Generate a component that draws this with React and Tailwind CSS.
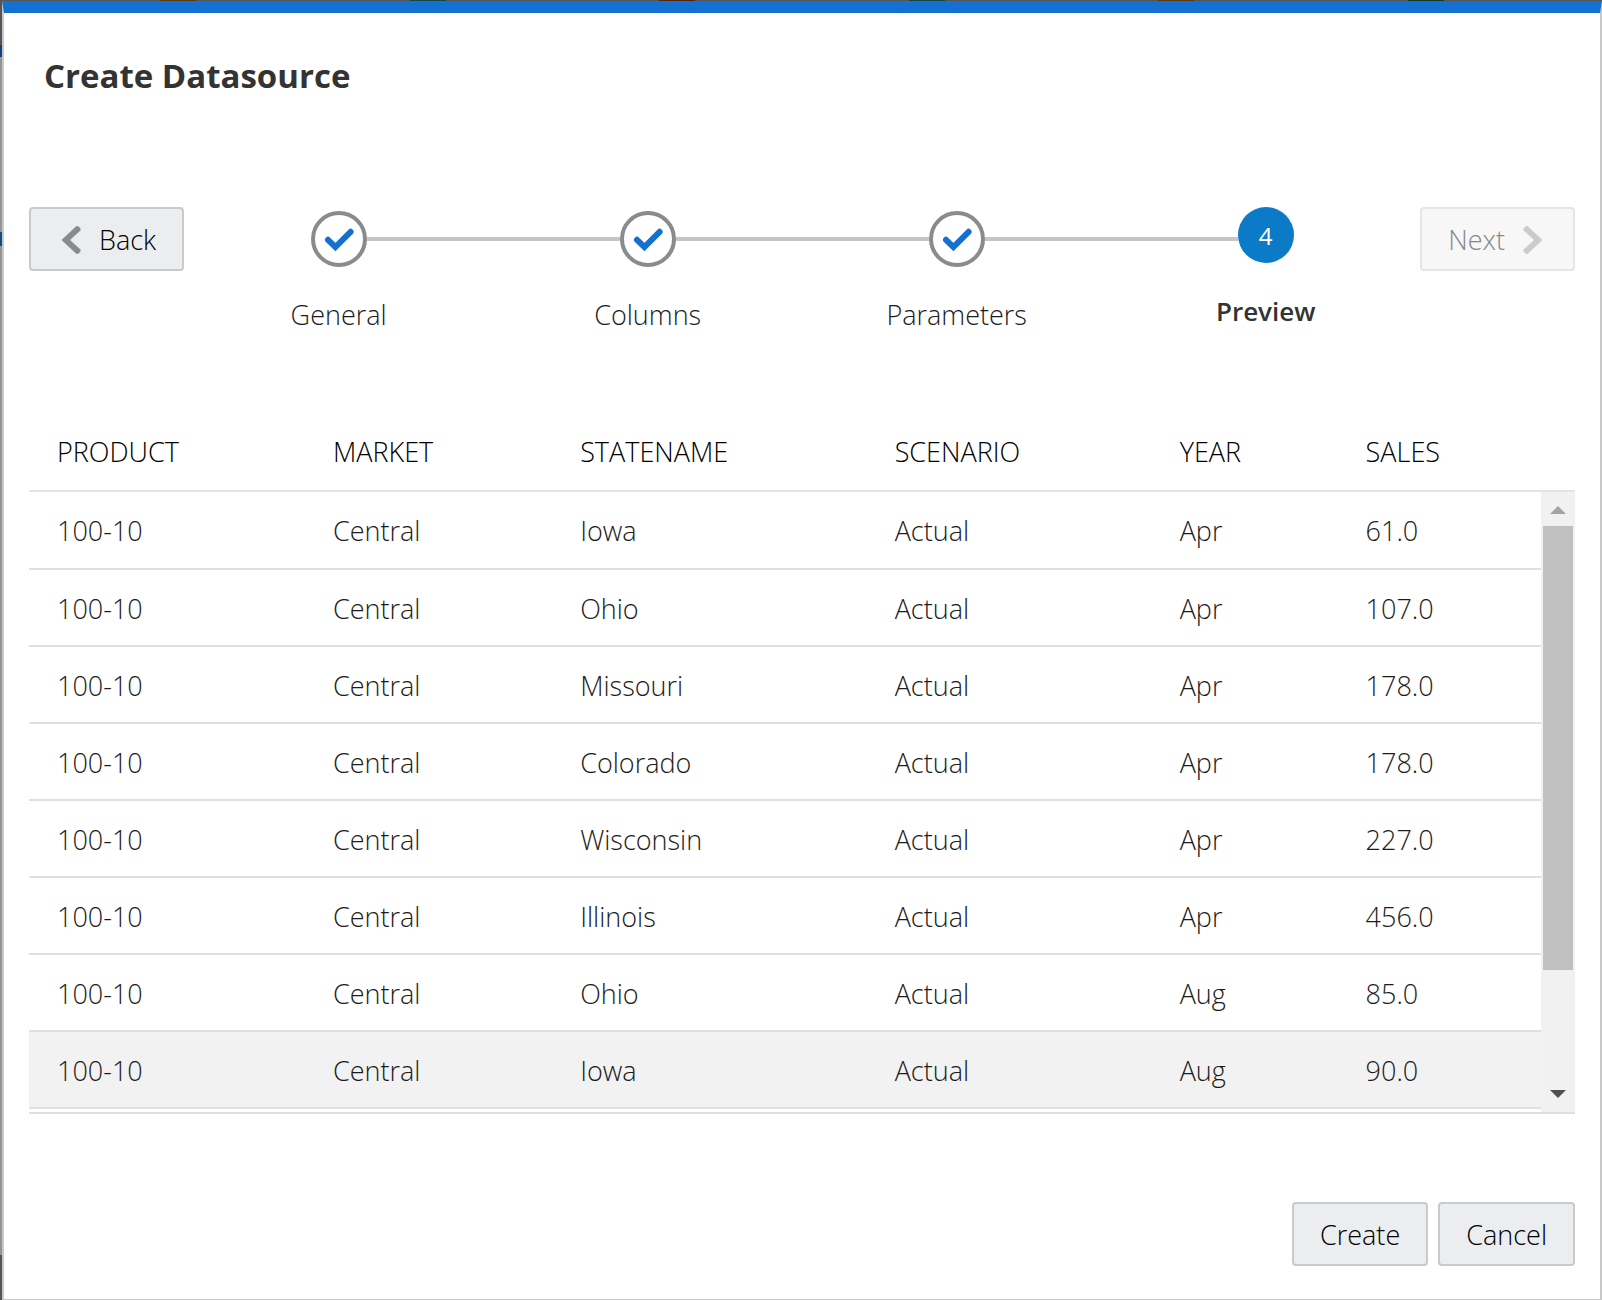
const steps = [
  { label: "General", done: true },
  { label: "Columns", done: true },
  { label: "Parameters", done: true },
  { label: "Preview", done: false },
];

const columns = [
  { name: "PRODUCT", width: "w-[18.25%]" },
  { name: "MARKET", width: "w-[16.35%]" },
  { name: "STATENAME", width: "w-[20.8%]" },
  { name: "SCENARIO", width: "w-[18.85%]" },
  { name: "YEAR", width: "w-[12.3%]" },
  { name: "SALES", width: "" },
];

const rows = [
  ["100-10", "Central", "Iowa", "Actual", "Apr", "61.0"],
  ["100-10", "Central", "Ohio", "Actual", "Apr", "107.0"],
  ["100-10", "Central", "Missouri", "Actual", "Apr", "178.0"],
  ["100-10", "Central", "Colorado", "Actual", "Apr", "178.0"],
  ["100-10", "Central", "Wisconsin", "Actual", "Apr", "227.0"],
  ["100-10", "Central", "Illinois", "Actual", "Apr", "456.0"],
  ["100-10", "Central", "Ohio", "Actual", "Aug", "85.0"],
  ["100-10", "Central", "Iowa", "Actual", "Aug", "90.0"],
];

// Edge of the dimmed page that shows above the dialog.
const backdropTiles = ["bg-[#5c3a10]", "bg-[#15463f]", "bg-[#55260e]", "bg-[#15463f]", "bg-[#5c3a10]", "bg-[#123a28]"];

const buttonClass =
  "flex h-16 items-center rounded-sm border-2 border-[#c8cacb] bg-[#ebedef] px-[26px] pt-0.5 text-black";

function Check() {
  return (
    <svg viewBox="0 0 30 24" className="h-6 w-[30px] overflow-visible" aria-hidden="true">
      <path d="M4 12.8 L11.4 20 L26.6 4.8" fill="none" stroke="#1471d2" strokeWidth="6" strokeLinecap="round" strokeLinejoin="miter" />
    </svg>
  );
}

function Chevron({ flip, color }) {
  return (
    <svg viewBox="0 0 20 28" className={flip ? "h-7 w-5 rotate-180" : "h-7 w-5"} aria-hidden="true">
      <path d="M0.5 14 L14.6 0.8 Q16.4 -0.6 17.8 0.8 L19.5 2.6 V4.4 L9 14 L19.5 23.6 V25.4 L17.8 27.2 Q16.4 28.6 14.6 27.2 Z" fill={color} />
    </svg>
  );
}

function Stepper() {
  return (
    <ol className="grid flex-1 grid-cols-4">
      {steps.map((step, i) => (
        <li key={step.label} className="flex flex-col" aria-current={step.done ? undefined : "step"}>
          <div className="flex h-16">
            <span className={i === 0 ? "flex-1" : "h-1 flex-1 self-center bg-[#c4c5c6]"} />
            {step.done ? (
              <span className="flex size-14 items-center justify-center self-center rounded-full border-4 border-[#898c8e]">
                <Check />
              </span>
            ) : (
              <span className="flex size-14 items-center justify-center self-start rounded-full bg-[#0b7bc8] pt-0.5 text-2xl font-normal text-white">
                {i + 1}
              </span>
            )}
            <span className={i === steps.length - 1 ? "flex-1" : "h-1 flex-1 self-center bg-[#c4c5c6]"} />
          </div>
          <span
            className={
              step.done
                ? "mt-[26px] text-center"
                : "mt-[22px] text-center text-[26px] leading-9 font-semibold text-[#333]"
            }
          >
            {step.label}
          </span>
        </li>
      ))}
    </ol>
  );
}

function Scrollbar() {
  return (
    <div className="flex w-[34px] flex-col" aria-hidden="true">
      <div className="h-20 border-b-2 border-[#e4e4e4]" />
      <div className="flex flex-1 flex-col bg-[#f1f1f1]">
        <svg viewBox="0 0 34 34" className="h-[34px] w-[34px]">
          <path d="M9 22 L17 14 L25 22 Z" fill="#a3a3a3" />
        </svg>
        <div className="mx-0.5 h-[444px] bg-[#c1c1c1]" />
        <svg viewBox="0 0 34 34" className="mt-auto h-[34px] w-[34px]">
          <path d="M9 12 L17 20 L25 12 Z" fill="#505050" />
        </svg>
      </div>
    </div>
  );
}

export default function App() {
  return (
    <div className="min-h-screen bg-[linear-gradient(#555_45px,#15407c_45px,#15407c_57px,#949494_57px,#949494_232px,#114d80_232px,#114d80_246px,#949494_246px,#949494_1255px,#555_1255px)] pl-0.5">
      <div className="flex h-px justify-between px-[158px]">
        {backdropTiles.map((tile, i) => (
          <div key={i} className={`w-9 ${tile}`} />
        ))}
      </div>
      <main
        className="flex min-h-[1299px] flex-col border-x-2 border-t-12 border-b border-[#c8c8c8] border-t-[#1471d2] bg-white font-['Open_Sans','Noto_Sans',sans-serif] text-[27px] leading-9 font-light text-[#1c1c1c]"
      >
        <h1 className="mt-10 ml-10 text-[33px] leading-[46px] font-bold text-[#333]">Create Datasource</h1>

        <div className="mt-[108px] flex items-start px-[25px]">
          <button type="button" className={buttonClass}>
            <span className="mr-[18px] ml-1"><Chevron color="#898c8e" /></span>
            Back
          </button>
          <Stepper />
          <button type="button" disabled className="flex h-16 items-center rounded-sm border-2 border-[#e4e5e5] bg-[#f7f7f8] px-[26px] pt-0.5 text-[#888]">
            Next
            <span className="mr-1 ml-[18px]"><Chevron flip color="#cbcbcb" /></span>
          </button>
        </div>

        <div className="mx-[25px] mt-[79px] flex border-b-2 border-[#e0e0e0]">
          <div className="flex-1 pb-[3px]">
            <table className="w-full table-fixed border-separate border-spacing-0 text-left">
              <thead>
                <tr>
                  {columns.map((c) => (
                    <th key={c.name} className={`${c.width} h-20 border-b-2 border-[#e4e4e4] pt-0.5 pl-7 font-light text-black`}>
                      {c.name}
                    </th>
                  ))}
                </tr>
              </thead>
              <tbody>
                {rows.map((row, i) => (
                  <tr key={i} className="h-[77px] first:h-[78px] last:bg-[#f2f2f2]">
                    {row.map((cell, j) => (
                      <td key={j} className="border-b-2 border-[#e0e0e0] pt-0.5 pl-7">{cell}</td>
                    ))}
                  </tr>
                ))}
              </tbody>
            </table>
          </div>
          <Scrollbar />
        </div>

        <div className="mt-[88px] mb-8 flex justify-end gap-2.5 px-[25px]">
          <button type="button" className={buttonClass}>Create</button>
          <button type="button" className={buttonClass}>Cancel</button>
        </div>
      </main>
    </div>
  );
}
